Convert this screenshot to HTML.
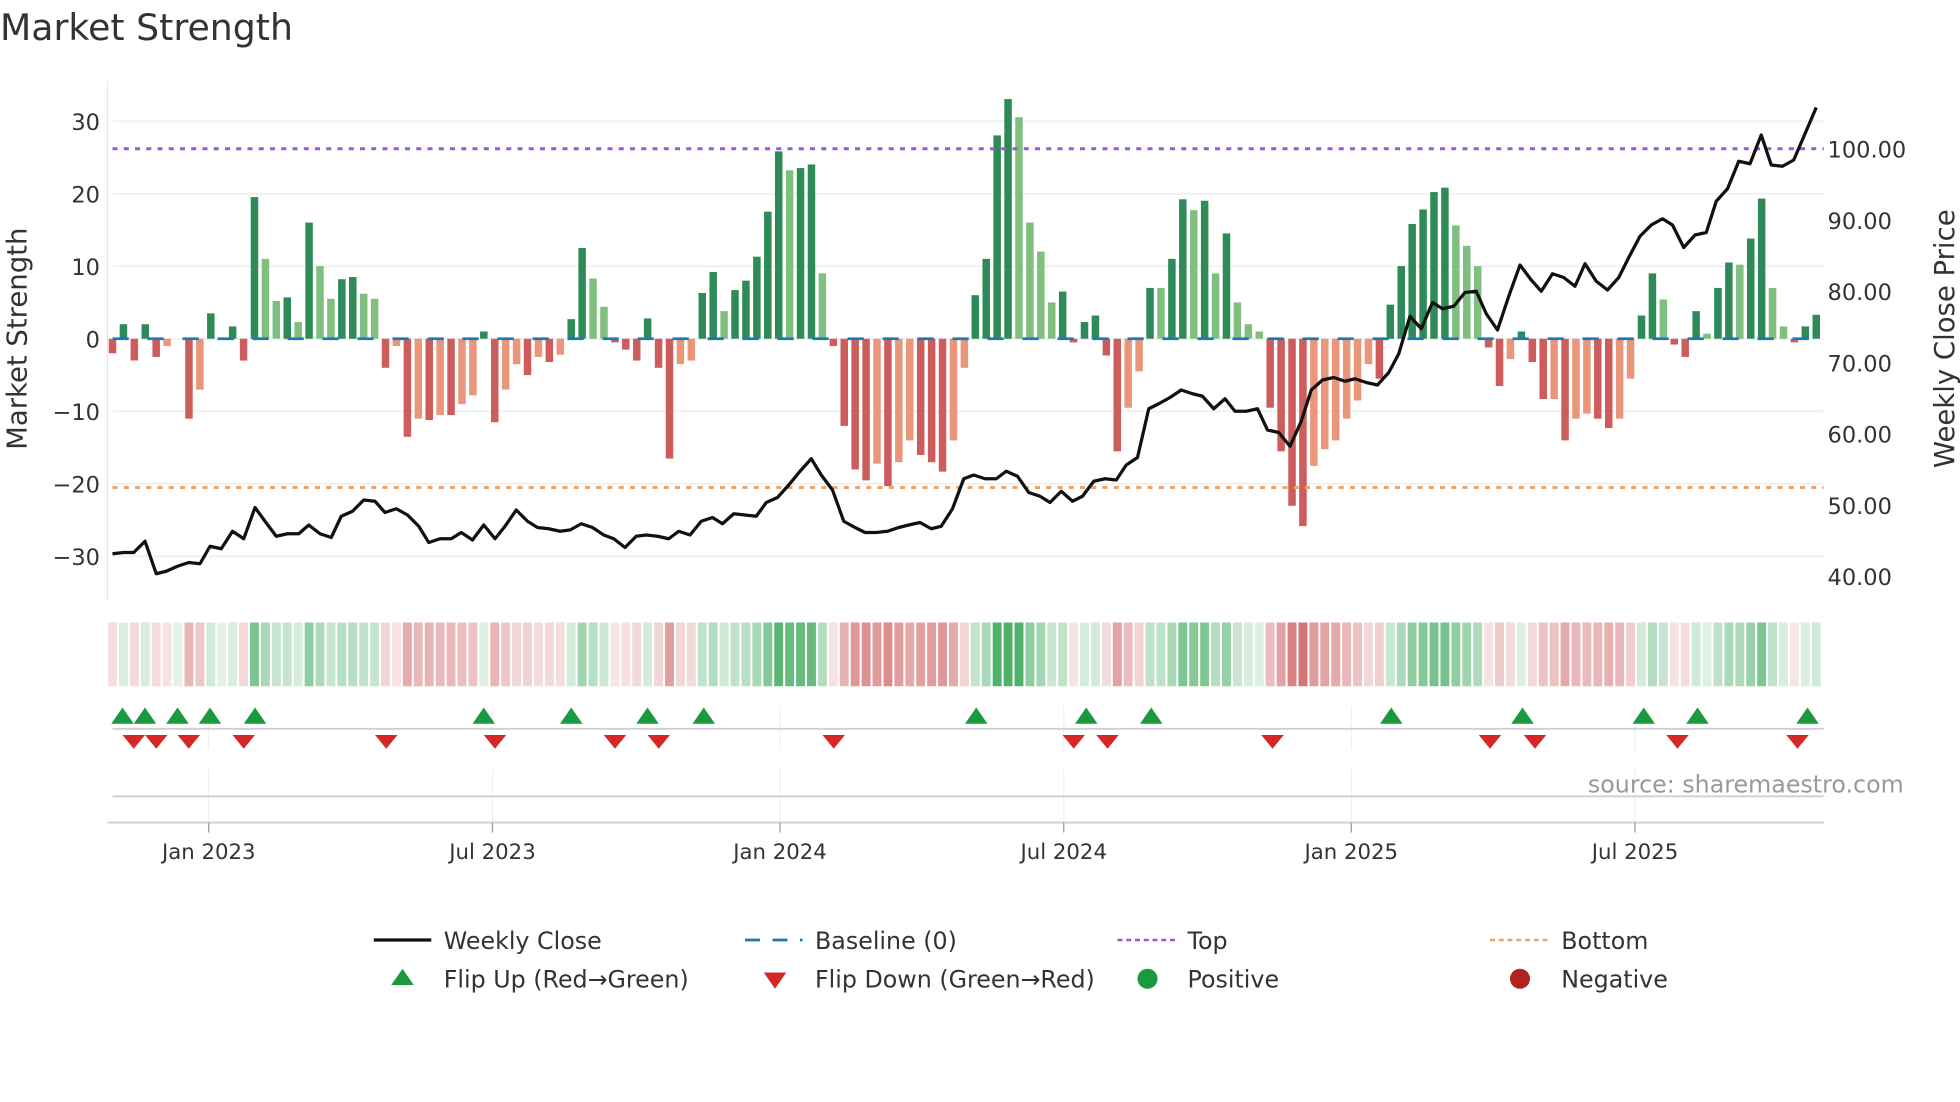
<!DOCTYPE html>
<html><head><meta charset="utf-8"><style>
html,body{margin:0;padding:0;background:#fff;}
svg{display:block;font-family:"DejaVu Sans","Liberation Sans",sans-serif;}
</style></head><body>
<svg id="s" width="1960" height="1102" viewBox="0 0 1568 881.6" xmlns="http://www.w3.org/2000/svg">
<rect width="1568" height="882" fill="#fff"/>
<text x="0" y="32" font-size="29" fill="#333">Market Strength</text>
<g id="grid"></g>
<line x1="86" y1="65" x2="86" y2="480" stroke="#e6e6e6" stroke-width="1"/>
<g id="bars"></g>
<line x1="90" y1="271" x2="1459" y2="271" stroke="#1f77b4" stroke-width="2.2" stroke-dasharray="13 15"/>
<line x1="90" y1="119" x2="1459" y2="119" stroke="#9b59d0" stroke-width="2.4" stroke-dasharray="4 5"/>
<line x1="90" y1="390" x2="1459" y2="390" stroke="#f4a261" stroke-width="2.4" stroke-dasharray="4 5"/>
<polyline id="price" fill="none" stroke="#111" stroke-width="2.6" stroke-linejoin="round"/>
<g id="heat"></g>
<g id="marks"></g>
<line x1="90" y1="583" x2="1459" y2="583" stroke="#cfcfcf" stroke-width="1.5"/>
<line x1="90" y1="637" x2="1459" y2="637" stroke="#cfcfcf" stroke-width="1.5"/>
<line x1="86" y1="658" x2="1459" y2="658" stroke="#cfcfcf" stroke-width="1.5"/>
<g id="ticks" font-size="17" fill="#333" text-anchor="middle"></g>
<g font-size="18" fill="#333" text-anchor="end">
<text x="80" y="104">30</text><text x="80" y="162">20</text><text x="80" y="220">10</text><text x="80" y="278">0</text>
<text x="80" y="336">−10</text><text x="80" y="394">−20</text><text x="80" y="452">−30</text>
</g>
<g font-size="18" fill="#333">
<text x="1462" y="126">100.00</text><text x="1462" y="183">90.00</text><text x="1462" y="240">80.00</text>
<text x="1462" y="297">70.00</text><text x="1462" y="354">60.00</text><text x="1462" y="411">50.00</text><text x="1462" y="468">40.00</text>
</g>
<text transform="translate(21,271) rotate(-90)" font-size="22" fill="#333" text-anchor="middle">Market Strength</text>
<text transform="translate(1563,271) rotate(-90)" font-size="22" fill="#333" text-anchor="middle">Weekly Close Price</text>
<text x="1523" y="634" font-size="19" fill="#999" text-anchor="end">source: sharemaestro.com</text>
<g font-size="19" fill="#333">
<line x1="299" y1="752" x2="345" y2="752" stroke="#111" stroke-width="2.6"/>
<text x="355" y="759">Weekly Close</text>
<line x1="596" y1="752" x2="642" y2="752" stroke="#1f77b4" stroke-width="2.2" stroke-dasharray="12 10"/>
<text x="652" y="759">Baseline (0)</text>
<line x1="894" y1="752" x2="940" y2="752" stroke="#9b59d0" stroke-width="2" stroke-dasharray="4 3"/>
<text x="950" y="759">Top</text>
<line x1="1192" y1="752" x2="1238" y2="752" stroke="#f4a261" stroke-width="2" stroke-dasharray="4 3"/>
<text x="1249" y="759">Bottom</text>
<polygon points="313,788 331,788 322,775" fill="#1a9a3e"/>
<text x="355" y="790">Flip Up (Red→Green)</text>
<polygon points="611,778 629,778 620,791" fill="#d62728"/>
<text x="652" y="790">Flip Down (Green→Red)</text>
<circle cx="918" cy="783" r="8" fill="#1a9a3e"/>
<text x="950" y="790">Positive</text>
<circle cx="1216" cy="783" r="8" fill="#b22222"/>
<text x="1249" y="790">Negative</text>
</g>
</svg>
<script>
var NS="http://www.w3.org/2000/svg";
function el(p,t,a){var e=document.createElementNS(NS,t);for(var k in a)e.setAttribute(k,a[k]);document.getElementById(p).appendChild(e);return e;}
[97,155,213,271,329,387,445].forEach(function(y){el("grid","line",{x1:90,x2:1459,y1:y,y2:y,stroke:"#eef0f4","stroke-width":1.5});});
[167,394,624,851,1081,1308].forEach(function(x){
 el("grid","line",{x1:x,x2:x,y1:565,y2:600,stroke:"#eef0f4","stroke-width":1});
 el("grid","line",{x1:x,x2:x,y1:615,y2:658,stroke:"#eef0f4","stroke-width":1});
});
var V="-2 2 -3 2 -2.5 -1L 0 -11 -7L 3.5 0 1.7 -3 19.5 11L 5.2L 5.7 2.3L 16 10L 5.5L 8.2 8.5 6.2L 5.5L -4 -1L -13.5 -11L -11.2 -10.5L -10.5 -9L -7.8L 1 -11.5 -7L -3.5L -5 -2.5L -3.2 -2.2L 2.7 12.5 8.3L 4.4L -0.5 -1.5 -3 2.8 -4 -16.5 -3.5L -3L 6.3 9.2 3.8L 6.7 8 11.3 17.5 25.8 23.2L 23.5 24 9L -1 -12 -18 -19.5 -17.2L -20.3 -17L -14L -16 -17 -18.3 -14L -4L "+
"6 11 28 33 30.5L 16L 12L 5L 6.5 -0.5 2.3 3.2 -2.3 -15.5 -9.5L -4.5L 7 7L 11 19.2 17.7L 19 9L 14.5 5L 2L 1L -9.5 -15.5 -23 -25.8 -17.5L -15.2L -14L -11L -8.5L -3.5L -5.5 4.7 10 15.8 17.8 20.2 20.8 15.6L 12.8L 10L -1.2 -6.5 -2.8L 1 -3.2 -8.3 -8.3L -14 -11L -10.3L -11 -12.3 -11L -5.5L 3.2 9 5.4L -0.8 -2.5 3.8 0.7L 7 10.5 10.2L 13.8 19.3 7L 1.7L -0.5 1.7 3.3";
var arr=V.split(" ");var n=arr.length;var step=(1453-90)/(n-1);
arr.forEach(function(s,i){
 var L=s.indexOf("L")>=0;var v=parseFloat(s);var x=90+i*step;
 var h=Math.abs(v)*5.81;
 if(v!==0){
  var c=v>0?(L?"#7fbf7f":"#2e8b57"):(L?"#e9967a":"#cd5c5c");
  el("bars","rect",{x:x-3,y:v>0?271-h:271,width:6,height:h,fill:c});
 }
 var a=Math.min(0.15+0.75*Math.abs(v)/28,0.9);
 var hc=v>=0?"rgba(60,168,90,"+a+")":"rgba(205,92,92,"+a+")";
 el("heat","rect",{x:x-step/2+0.8,y:498,width:step-1.6,height:51,fill:hc});
});
var P="90,443 99,442 107,442 116,433 125,459 133,457 142,453 151,450 160,451 168,437 177,439 186,425 195,431 204,406 212,417 221,429 230,427 239,427 247,420 256,427 265,430 273,413 282,409 291,400 300,401 308,410 317,407 326,412 335,421 343,434 352,431 361,431 369,426 378,432 387,420 396,431 404,421 413,408 422,417 430,422 439,423 448,425 456,424 465,419 474,422 483,428 491,431 500,438 509,429 517,428 526,429 535,431 543,425 552,428 561,417 570,414 578,419 587,411 596,412 605,413 613,402 622,398 631,388 640,377 649,367 657,380 666,392 675,417 684,422 692,426 701,426 710,425 719,422 727,420 736,418 745,423 753,421 762,407 771,383 779,380 788,383 797,383 805,377 814,381 823,394 832,397 840,402 849,393 858,401 866,397 875,385 884,383 893,384 901,372 910,366 919,327 927,323 936,318 945,312 954,315 962,317 971,327 980,319 988,329 997,329 1006,327 1014,344 1023,346 1032,357 1041,337 1049,312 1058,304 1067,302 1076,305 1084,303 1093,306 1102,308 1111,298 1119,283 1128,253 1137,263 1146,242 1154,247 1163,245 1172,234 1181,233 1189,251 1198,264 1207,237 1216,212 1225,224 1233,233 1242,219 1251,222 1260,229 1268,211 1277,225 1286,232 1295,222 1303,206 1312,189 1321,180 1330,175 1338,180 1347,198 1356,188 1365,186 1373,161 1382,151 1391,129 1400,131 1409,108 1417,132 1426,133 1435,128 1444,107 1453,86";
document.getElementById("price").setAttribute("points",P);
[98,116,142,168,204,387,457,518,563,781,869,921,1113,1218,1315,1358,1446].forEach(function(x){
 el("marks","polygon",{points:(x-9)+",579 "+(x+9)+",579 "+x+",566",fill:"#1a9a3e"});});
[107,125,151,195,309,396,492,527,667,859,886,1018,1192,1228,1342,1438].forEach(function(x){
 el("marks","polygon",{points:(x-9)+",588 "+(x+9)+",588 "+x+",599",fill:"#d62728"});});
[[167,"Jan 2023"],[394,"Jul 2023"],[624,"Jan 2024"],[851,"Jul 2024"],[1081,"Jan 2025"],[1308,"Jul 2025"]].forEach(function(t){
 el("ticks","line",{x1:t[0],x2:t[0],y1:658,y2:666,stroke:"#999","stroke-width":1});
 var e=el("ticks","text",{x:t[0],y:687});e.textContent=t[1];});
</script>
</body></html>
